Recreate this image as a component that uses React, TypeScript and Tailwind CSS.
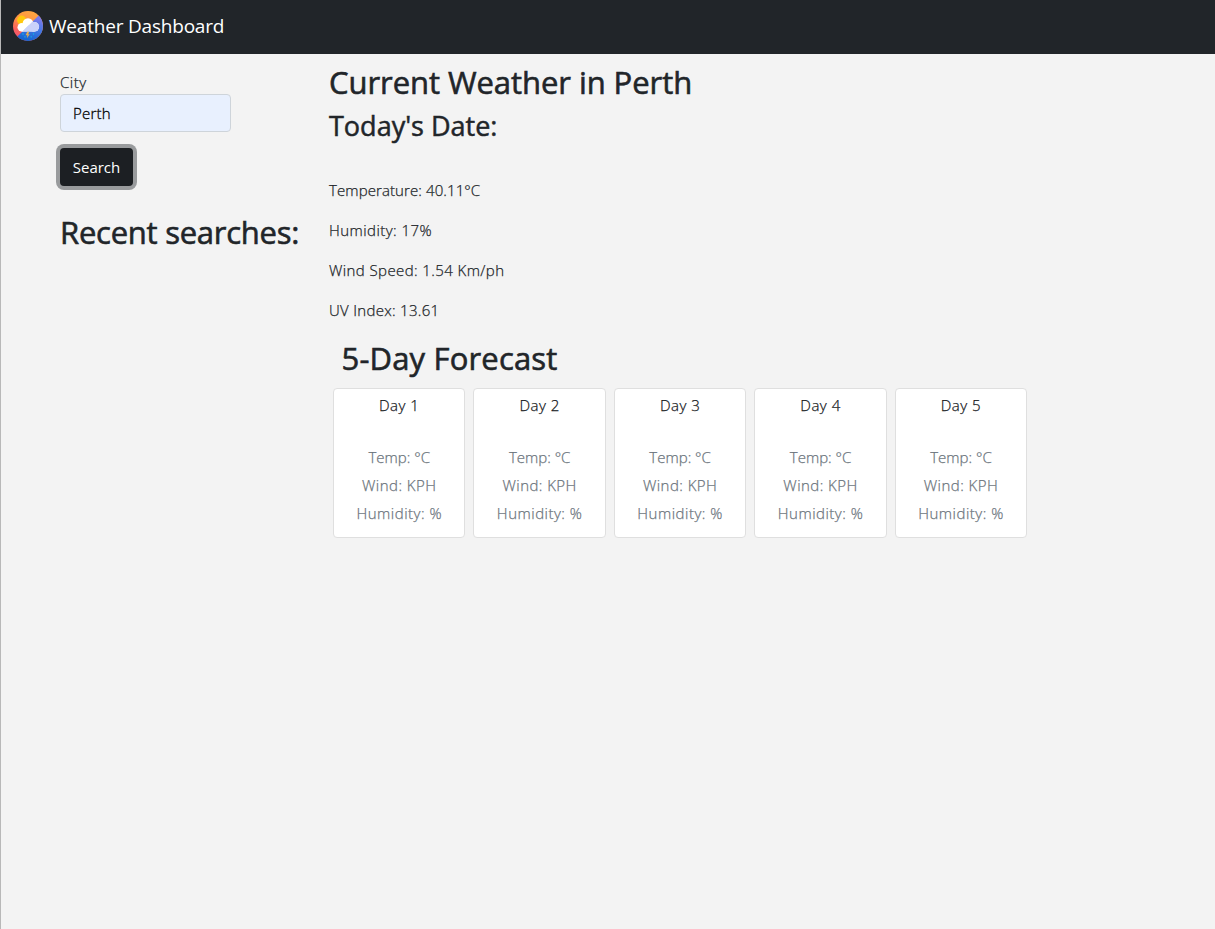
const days = ['Day 1', 'Day 2', 'Day 3', 'Day 4', 'Day 5'];

function WeatherLogo() {
  return (
    <svg width="30" height="30" viewBox="0 0 30 30" aria-hidden="true">
      <defs>
        <clipPath id="disc"><circle cx="15" cy="15" r="15" /></clipPath>
        <linearGradient id="warm" x1="0.6" y1="0" x2="0.2" y2="1">
          <stop offset="0" stopColor="#ffa640" />
          <stop offset="0.4" stopColor="#ff8f45" />
          <stop offset="0.7" stopColor="#f8605c" />
          <stop offset="1" stopColor="#e9507a" />
        </linearGradient>
        <linearGradient id="cool" x1="0.7" y1="0.2" x2="0.5" y2="1">
          <stop offset="0" stopColor="#7c7bea" />
          <stop offset="0.5" stopColor="#4176e4" />
          <stop offset="1" stopColor="#1264cf" />
        </linearGradient>
        <clipPath id="lower"><path d="M25.6 4.4 30 2v28H0l4.4-4.4z" /></clipPath>
      </defs>
      <g clipPath="url(#disc)">
        <path fill="url(#warm)" d="M0 0h30v30H0z" />
        <path fill="url(#cool)" d="M25.6 4.4 30 0v30H0l4.4-4.4z" />
        <circle cx="8.7" cy="9.2" r="4.6" fill="#ffc90e" />
        <g fill="#fff">
          <circle cx="8.8" cy="16.3" r="4.3" />
          <circle cx="15" cy="12.6" r="5.4" />
          <circle cx="21.3" cy="15.8" r="4.8" />
          <path d="M8.5 14h13v6.6h-13z" />
        </g>
        <g fill="#c9d2fa" clipPath="url(#lower)">
          <circle cx="8.8" cy="16.3" r="4.3" />
          <circle cx="15" cy="12.6" r="5.4" />
          <circle cx="21.3" cy="15.8" r="4.8" />
          <path d="M8.5 14h13v6.6h-13z" />
        </g>
        <path d="M10 22.5v1M20.5 22.5v1M12 25.3v.8M18.2 25.3v.8" stroke="#1b9fe0" strokeWidth="1.3" strokeLinecap="round" />
        <path fill="#e8ad50" d="m14.2 20.8-1.5 3.4h1.8l-.7 3 2.9-4h-1.6l1.2-2.4z" />
      </g>
    </svg>
  );
}

export default function App() {
  return (
    <div className="min-h-[929px] border-l border-[#b8b8b8] bg-[#f3f3f3] font-['Open_Sans','Noto_Sans',sans-serif] text-base font-light text-[#212529]">
      <nav className="flex h-[54px] items-center gap-[6px] bg-[#212529] pb-[2px] pl-3">
        <WeatherLogo />
        <span className="whitespace-nowrap text-[19px] font-normal leading-[30px] tracking-[-0.2px] text-white">Weather Dashboard</span>
      </nav>
      <main className="flex">
        <aside className="w-[328px] shrink-0 pl-[59px] pt-4">
          <label htmlFor="city" className="block text-[15px] leading-6 tracking-[0.5px] [-webkit-text-stroke:0.25px]"><span>City</span></label>
          <input
            id="city"
            defaultValue="Perth"
            className="block h-[38px] w-[171px] rounded-[4px] border border-[#ced4da] bg-[#e8f0fe] px-3 text-[15px] font-light tracking-[0.2px] text-black outline-none [-webkit-text-stroke:0.3px]"
          />
          <button className="mt-4 flex h-[38px] w-[73px] items-center justify-center rounded-[4px] bg-[#1c1f23] text-[15px] font-normal text-white ring-4 ring-[#999b9d]">
            <span>Search</span>
          </button>
          <h2 className="mt-[27px] whitespace-nowrap text-[31px] font-normal leading-[38px] tracking-[-0.25px] [-webkit-text-stroke:0.6px]"><span>Recent searches:</span></h2>
        </aside>
        <section className="w-[704px] pt-[9px]">
          <h2 className="whitespace-nowrap text-[31px] font-normal leading-[38px] tracking-[-0.06px] [-webkit-text-stroke:0.6px]"><span>Current Weather in Perth</span></h2>
          <h3 className="mt-2 whitespace-nowrap text-[27px] font-normal leading-[34px] [-webkit-text-stroke:0.5px]"><span>Today's Date:</span></h3>
          <div className="mt-[35px] flex flex-col gap-4 text-[15px] leading-6 [-webkit-text-stroke:0.25px]">
            <p className="tracking-[0.1px]"><span>Temperature: 40.11°C</span></p>
            <p className="tracking-[0.45px]"><span>Humidity: 17%</span></p>
            <p className="tracking-[0.41px]"><span>Wind Speed: 1.54 Km/ph</span></p>
            <p className="tracking-[0.3px]"><span>UV Index: 13.61</span></p>
          </div>
          <h2 className="mt-[17px] whitespace-nowrap pl-[12.5px] text-[31px] font-normal leading-[38px] tracking-[0.17px] [-webkit-text-stroke:0.6px]"><span>5-Day Forecast</span></h2>
          <div className="mt-[11px] flex gap-2 pl-1">
            {days.map((day) => (
              <article key={day} className="h-[150px] w-[132.45px] shrink-0 rounded-[4px] border border-[#dfdfdf] bg-white pt-1 text-center text-[15px] [-webkit-text-stroke:0.25px]">
                <h5 className="leading-6 tracking-[0.5px] text-[#16191c]"><span>{day}</span></h5>
                <div className="mt-[26px] leading-7 text-[#6c757d]">
                  <p><span>Temp: °C</span></p>
                  <p className="tracking-[0.45px]"><span>Wind: KPH</span></p>
                  <p className="tracking-[0.5px]"><span>Humidity: %</span></p>
                </div>
              </article>
            ))}
          </div>
        </section>
      </main>
    </div>
  );
}
